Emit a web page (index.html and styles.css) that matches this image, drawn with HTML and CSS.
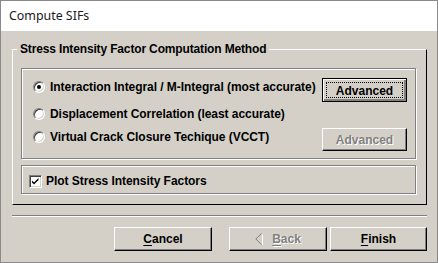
FILE: index.html
```html
<!DOCTYPE html>
<html>
<head>
    <title>Compute SIFs</title>
    <link rel="stylesheet" href="styles.css">
</head>
<body>
    <div class="window">
        <div class="titlebar">Compute SIFs</div>
        <div class="content">
            <fieldset class="group">
                <legend>Stress Intensity Factor Computation Method</legend>
                <div class="panel methods">
                    <div class="row row-first">
                        <label class="option"><span class="radio checked"></span>Interaction Integral / M-Integral (most accurate)</label>
                        <button class="btn btn-default">Advanced</button>
                    </div>
                    <div class="row row-mid">
                        <label class="option"><span class="radio"></span>Displacement Correlation (least accurate)</label>
                    </div>
                    <div class="row row-last">
                        <label class="option"><span class="radio"></span>Virtual Crack Closure Techique (VCCT)</label>
                        <button class="btn btn-small" disabled>Advanced</button>
                    </div>
                </div>
                <div class="panel plot">
                    <label class="option">
                        <span class="check">
                            <svg width="9" height="9" viewBox="0 0 9 9"><path d="M1 3.5 L3 5.5 L7.5 1 L7.5 3 L3 7.5 L1 5.5 Z" fill="#000"/></svg>
                        </span>Plot Stress Intensity Factors
                    </label>
                </div>
            </fieldset>
            <div class="separator"></div>
            <div class="footer">
                <button class="btn btn-wide cancel"><u>C</u>ancel</button>
                <button class="btn btn-wide back" disabled>
                    <svg class="arrow" width="8" height="12" viewBox="0 0 8 12"><path d="M6.5 0.5 L0.8 6 L6.5 11.5" fill="none" stroke="#808080"/><path d="M7.5 1.5 L7.5 12" stroke="#fff"/></svg>
                    <u>B</u>ack
                </button>
                <button class="btn btn-wide finish"><u>F</u>inish</button>
            </div>
        </div>
    </div>
</body>
</html>
```

FILE: styles.css
```css
body {
    margin: 0;
    background-color: #d4d0c8;
}

.window {
    width: 438px;
    height: 263px;
    box-sizing: border-box;
    border: 1px solid #8a8a8a;
    background-color: #d4d0c8;
    font-family: "Liberation Sans", Arial, sans-serif;
    font-size: 12px;
    font-weight: bold;
    color: #000;
}

.titlebar {
    height: 30px;
    line-height: 30px;
    padding-left: 8px;
    background-color: #fff;
    font-family: "Noto Sans", "Open Sans", sans-serif;
    font-weight: normal;
    font-size: 12.4px;
    color: #1a1a1a;
}

.content {
    padding: 0 10px 0 11px;
}

.group {
    margin: 11px 0 0 0;
    padding: 12px 10px 10px 8px;
    border: 1px solid;
    border-color: #fff #000 #000 #fff;
    min-width: 0;
}

.group legend {
    margin-left: -4px;
    padding: 0 3px;
    line-height: 14px;
    letter-spacing: -0.15px;
}

.panel {
    border: 1px solid #808080;
    box-shadow: inset 1px 1px #fff, 1px 1px #fff;
}

.methods {
    padding: 9px 8px 7px 11px;
}

.row {
    display: flex;
    justify-content: space-between;
    align-items: flex-start;
}

.row-first {
    height: 24px;
}
.row-first .option {
    margin-top: 1px;
}

.row-mid {
    height: 26px;
}
.row-mid .option {
    margin-top: 4px;
}

.row-last {
    height: 23px;
}
.row-last .option {
    margin-top: 1px;
}

.option {
    display: flex;
    align-items: center;
    line-height: 16px;
    white-space: nowrap;
    letter-spacing: -0.05px;
}

.radio {
    width: 12px;
    height: 12px;
    box-sizing: border-box;
    margin-right: 5px;
    border-radius: 50%;
    border: 1px solid;
    border-color: #808080 #fff #fff #808080;
    box-shadow: inset 1px 1px #404040, inset -1px -1px #d4d0c8;
    background-color: #fff;
    display: flex;
    align-items: center;
    justify-content: center;
}

.radio.checked::after {
    content: "";
    width: 4px;
    height: 4px;
    border-radius: 50%;
    background-color: #000;
}

.plot {
    margin-top: 6px;
    height: 29px;
    box-sizing: border-box;
    padding: 7px 0 0 7px;
}

.check {
    width: 13px;
    height: 13px;
    box-sizing: border-box;
    margin-right: 4px;
    border: 1px solid;
    border-color: #808080 #fff #fff #808080;
    box-shadow: inset 1px 1px #404040, inset -1px -1px #d4d0c8;
    background-color: #fff;
    display: flex;
    align-items: center;
    justify-content: center;
}

.check svg {
    display: block;
}

.btn {
    font-family: "Liberation Sans", Arial, sans-serif;
    font-size: 12px;
    font-weight: bold;
    color: #000;
    background-color: #d4d0c8;
    border: 1px solid;
    border-color: #fff #000 #000 #fff;
    box-shadow: inset -1px -1px #808080;
    padding: 0;
    margin: 0;
    display: flex;
    align-items: center;
    justify-content: center;
}

.btn:disabled {
    color: #808080;
    text-shadow: 1px 1px #fff;
}

.btn-default {
    width: 85px;
    height: 24px;
    padding-top: 2px;
    border-color: #000;
    box-shadow: inset 1px 1px #fff, inset -2px -2px #808080;
    outline: 1px dotted #000;
    outline-offset: -5px;
}

.btn-small {
    width: 85px;
    height: 23px;
}

.separator {
    margin-top: 10px;
    border-top: 1px solid #808080;
    border-bottom: 1px solid #fff;
}

.footer {
    display: flex;
    justify-content: flex-end;
    margin-top: 10px;
}

.btn-wide {
    width: 98px;
    height: 24px;
}

.btn-wide u {
    text-underline-offset: 2px;
}

.cancel {
    margin-right: 17px;
}

.back {
    margin-right: 3px;
}

.finish {
    width: 97px;
}

.arrow {
    margin-right: 9px;
}
```
